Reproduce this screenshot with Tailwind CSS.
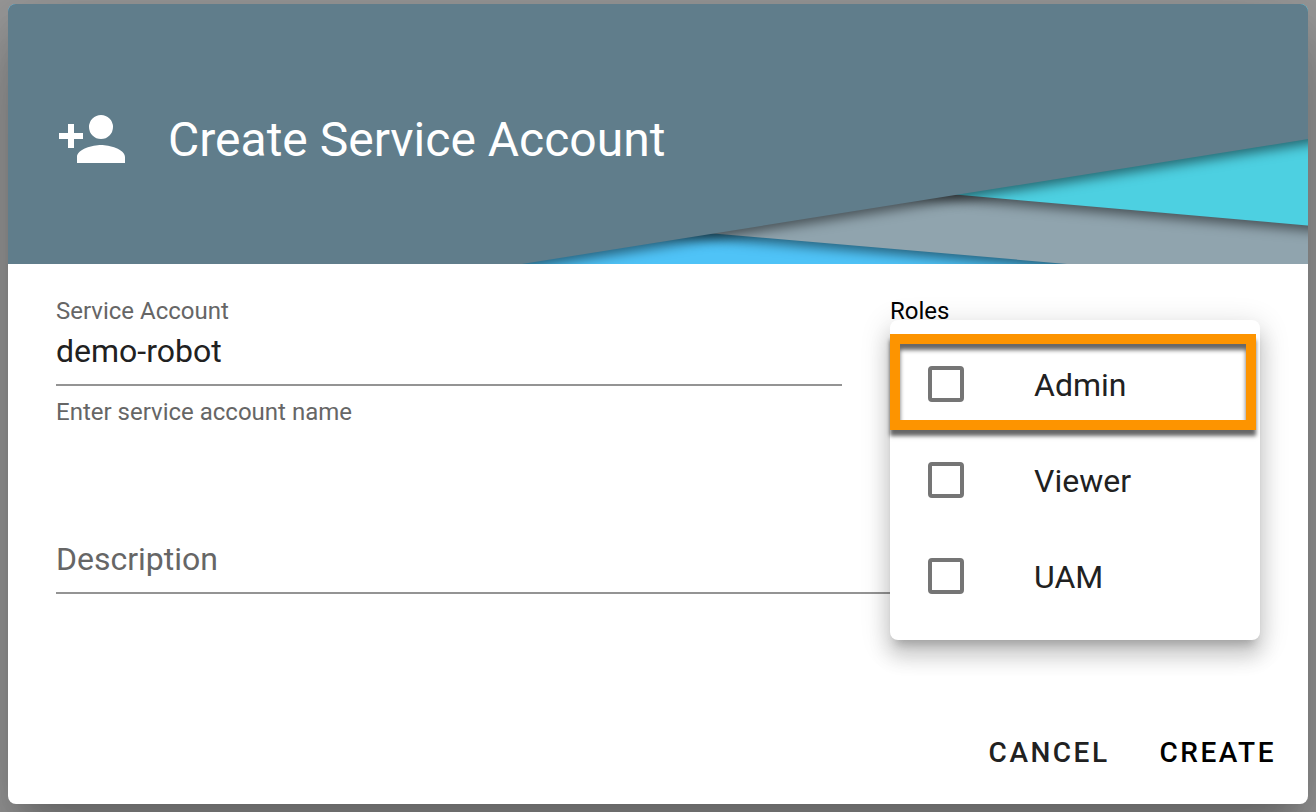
<!DOCTYPE html>
<html lang="en">
<head>
<meta charset="utf-8">
<title>Create Service Account</title>
<script src="https://cdn.jsdelivr.net/npm/@tailwindcss/browser@4"></script>
</head>
<body class="h-[812px] w-[1316px] overflow-hidden bg-[#999999] px-2 pt-1 font-['Roboto',sans-serif] text-[#212121]">
<main class="relative flex h-[800px] w-[1300px] flex-col rounded-lg bg-white shadow-[0_22px_30px_-14px_rgba(0,0,0,0.2),0_48px_76px_6px_rgba(0,0,0,0.14),0_18px_92px_16px_rgba(0,0,0,0.12)]">
  <header class="relative flex h-[260px] shrink-0 items-center overflow-hidden rounded-t-lg bg-[#607d8b] pl-12 pt-[10px]">
    <svg class="absolute inset-0" width="1300" height="260" viewBox="8 4 1300 260">
      <defs>
        <filter id="shade" filterUnits="userSpaceOnUse" x="-100" y="-100" width="1700" height="600" color-interpolation-filters="sRGB">
          <feDropShadow dx="0" dy="5" stdDeviation="6" flood-color="#000" flood-opacity="0.5"/>
        </filter>
      </defs>
      <rect x="0" y="0" width="1316" height="264" fill="#4fc3f7"/>
      <path filter="url(#shade)" fill="#90a4ae" d="M473 212.7L1473 299V-50H473Z"/>
      <path filter="url(#shade)" fill="#4dd0e1" d="M757 177L1457 238.7V-50H757Z"/>
      <path filter="url(#shade)" fill="#607d8b" d="M-80 359.5L1408 123.2V-80H-80Z"/>
    </svg>
    <svg class="relative shrink-0" width="72" height="72" viewBox="0 0 24 24" fill="#fff"><path d="M15 14C12.33 14 7 15.33 7 18V20H23V18C23 15.33 17.67 14 15 14M6 10V7H4V10H1V12H4V15H6V12H9V10M15 12A4 4 0 0 0 19 8A4 4 0 0 0 15 4A4 4 0 0 0 11 8A4 4 0 0 0 15 12Z"/></svg>
    <h1 class="relative ml-10 whitespace-nowrap pt-[2px] text-[48px] leading-[64px] text-white">Create Service Account</h1>
  </header>
  <section class="flex px-12 pt-8">
    <div class="w-[786px]">
      <div class="h-[30px] text-[24px] leading-[30px] text-[#666]">Service Account</div>
      <div class="h-[60px] border-b-2 border-[#949494] pt-[5px] text-[32px] leading-[40px]">demo-robot</div>
      <div class="mt-[11px] text-[24px] leading-[30px] text-[#666]">Enter service account name</div>
    </div>
    <div class="ml-12 text-[24px] leading-[30px] text-black">Roles</div>
  </section>
  <section class="px-12 pt-[112px]">
    <div class="h-[55px] border-b-2 border-[#949494] text-[32px] leading-[40px] text-[#666]">Description</div>
  </section>
  <footer class="mt-auto flex h-[104px] items-center justify-end gap-[50px] pr-8 pt-[2px] text-[28px] font-medium tracking-[2.5px]">
    <button>CANCEL</button>
    <button class="text-black">CREATE</button>
  </footer>
  <div class="absolute left-[882px] top-[316px] h-[320px] w-[370px] rounded-lg bg-white pt-4 shadow-[0_10px_10px_-6px_rgba(0,0,0,0.2),0_16px_20px_2px_rgba(0,0,0,0.14),0_6px_28px_4px_rgba(0,0,0,0.12)]">
    <label class="flex h-24 items-center pl-[38px] text-[32px]"><span class="mr-[70px] size-9 rounded border-4 border-[#757575]"></span><span class="pt-[2px]">Admin</span></label>
    <label class="flex h-24 items-center pl-[38px] text-[32px]"><span class="mr-[70px] size-9 rounded border-4 border-[#757575]"></span><span class="pt-[2px]">Viewer</span></label>
    <label class="flex h-24 items-center pl-[38px] text-[32px]"><span class="mr-[70px] size-9 rounded border-4 border-[#757575]"></span><span class="pt-[2px]">UAM</span></label>
    <div class="absolute left-0 top-[14px] h-24 w-[366px] border-[10px] border-[#fd9400] shadow-[0_6px_4px_rgba(0,0,0,0.6),inset_0_6px_4px_rgba(0,0,0,0.6)]"></div>
  </div>
</main>
</body>
</html>
